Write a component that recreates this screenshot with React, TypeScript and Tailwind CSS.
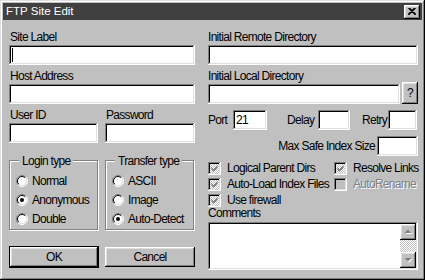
const ui = "font-['Liberation_Sans',Arial,sans-serif] text-[12px] tracking-[-0.7px] text-black";
const sunken =
  "bg-white shadow-[inset_-1px_-1px_#fff,inset_1px_1px_#808080,inset_-2px_-2px_#dfdfdf,inset_2px_2px_#000]";
const raised =
  "bg-[#c0c0c0] shadow-[inset_-1px_-1px_#000,inset_1px_1px_#fff,inset_-2px_-2px_#808080,inset_2px_2px_#dfdfdf]";
const dither =
  "bg-[repeating-conic-gradient(#fff_0%_25%,#c0c0c0_0%_50%)] bg-[length:2px_2px]";

const Radio = ({ label, on }: { label: string; on?: boolean }) => (
  <div className="flex h-[19px] items-center gap-[4px]">
    <svg width="12" height="12" viewBox="0 0 12 12">
      <circle cx="6" cy="6" r="5" fill="#fff" />
      <path d="M2.1 9.9 A5.5 5.5 0 0 1 9.9 2.1" fill="none" stroke="#808080" />
      <path d="M9.9 2.1 A5.5 5.5 0 0 1 2.1 9.9" fill="none" stroke="#fff" />
      <path d="M2.8 9.2 A4.5 4.5 0 0 1 9.2 2.8" fill="none" stroke="#000" />
      <path d="M9.2 2.8 A4.5 4.5 0 0 1 2.8 9.2" fill="none" stroke="#dfdfdf" />
      {on && <circle cx="6" cy="6" r="2" fill="#000" />}
    </svg>
    <span className="whitespace-nowrap leading-[16px]">{label}</span>
  </div>
);

const Check = ({ label, on, off }: { label: string; on?: boolean; off?: boolean }) => (
  <div className="flex h-[16px] items-center gap-[6px]">
    <div
      className={`h-[13px] w-[13px] shrink-0 ${
        off ? "bg-[#c0c0c0]" : dither
      } shadow-[inset_-1px_-1px_#fff,inset_1px_1px_#808080,inset_-2px_-2px_#dfdfdf,inset_2px_2px_#000]`}
    >
      {on && (
        <svg width="13" height="13" viewBox="0 0 13 13">
          <path d="M3.5 5.5 L5.5 7.5 L9.5 3.5 M3.5 6.5 L5.5 8.5 L9.5 4.5 M3.5 7.5 L5.5 9.5 L9.5 5.5" fill="none" stroke="#808080" strokeWidth="1" />
        </svg>
      )}
    </div>
    <span
      className={`leading-[16px] whitespace-nowrap ${
        off ? "text-[#808080] [text-shadow:1px_1px_0_#fff]" : ""
      }`}
    >
      {label}
    </span>
  </div>
);

const Group = ({ title, children }: { title: string; children: React.ReactNode }) => (
  <div className="relative h-[70px] w-[89px] border border-[#808080] shadow-[inset_1px_1px_#fff,1px_1px_#fff]">
    <span className="absolute left-[9px] top-[-8px] whitespace-nowrap bg-[#c0c0c0] px-[3px] leading-[16px]">
      {title}
    </span>
    <div className="flex flex-col pl-[6px] pt-[10px]">{children}</div>
  </div>
);

const Arrow = ({ up }: { up?: boolean }) => (
  <div className={`flex h-[16px] items-center justify-center ${raised}`}>
    <svg width="9" height="6" viewBox="0 0 9 6">
      {up ? (
        <>
          <polygon points="1.5,5 5,1.5 8.5,5" fill="#fff" />
          <polygon points="0.5,4 4,0.5 7.5,4" fill="#808080" />
        </>
      ) : (
        <>
          <polygon points="1.5,2 5,5.5 8.5,2" fill="#fff" />
          <polygon points="0.5,1 4,4.5 7.5,1" fill="#808080" />
        </>
      )}
    </svg>
  </div>
);

export default function App() {
  return (
    <div
      className={`${ui} h-[280px] w-[425px] bg-[#c0c0c0] p-[3px] shadow-[inset_-1px_-1px_#000,inset_1px_1px_#dfdfdf,inset_-2px_-2px_#808080,inset_2px_2px_#fff]`}
    >
      <div className="flex h-[17px] items-center justify-between bg-[#404040] pl-[3px] pr-[2px]">
        <span className="text-[11.5px] leading-[17px] tracking-normal text-white">FTP Site Edit</span>
        <div className={`flex h-[14px] w-[16px] items-center justify-center ${raised}`}>
          <svg width="8" height="7" viewBox="0 0 8 7">
            <path d="M0.5 0 L7.5 7 M7.5 0 L0.5 7 M1.5 0 L8 6.5 M6.5 0 L0 6.5" stroke="#000" strokeWidth="1.1" />
          </svg>
        </div>
      </div>

      <div className="flex gap-[13px] px-[6px]">
        <div className="flex w-[186px] flex-col pt-[9px]">
          <div className="h-[16px] pl-[1px] leading-[16px]">Site Label</div>
          <div className={`flex h-[20px] items-center pl-[3px] ${sunken}`}>
            <span className="h-[14px] w-[1px] bg-black" />
          </div>
          <div className="flex h-[19px] items-end pl-[1px] leading-[16px]">Host Address</div>
          <div className={`h-[20px] ${sunken}`} />
          <div className="flex h-[19px] items-end gap-[7px] leading-[16px]">
            <span className="w-[89px] pl-[1px]">User ID</span>
            <span className="pl-[1px]">Password</span>
          </div>
          <div className="flex gap-[7px]">
            <div className={`h-[20px] w-[89px] ${sunken}`} />
            <div className={`h-[20px] w-[90px] ${sunken}`} />
          </div>
          <div className="mt-[17px] flex gap-[7px]">
            <Group title="Login type">
              <Radio label="Normal" />
              <Radio label="Anonymous" on />
              <Radio label="Double" />
            </Group>
            <Group title="Transfer type">
              <Radio label="ASCII" />
              <Radio label="Image" />
              <Radio label="Auto-Detect" on />
            </Group>
          </div>
          <div className="mt-[16px] flex items-start gap-[6px]">
            <div className="h-[22px] w-[90px] border border-black">
              <div className={`flex h-full items-center justify-center ${raised}`}>OK</div>
            </div>
            <div className={`mt-[1px] flex h-[20px] w-[90px] items-center justify-center ${raised}`}>
              Cancel
            </div>
          </div>
        </div>

        <div className="flex w-[210px] flex-col pt-[9px]">
          <div className="h-[16px] leading-[16px]">Initial Remote Directory</div>
          <div className={`h-[20px] ${sunken}`} />
          <div className="flex h-[19px] items-end leading-[16px]">Initial Local Directory</div>
          <div className="flex h-[20px] items-end gap-[2px]">
            <div className={`h-[20px] w-[192px] ${sunken}`} />
            <div className={`flex h-[22px] w-[16px] items-center justify-center ${raised}`}>?</div>
          </div>
          <div className="mt-[6px] flex h-[20px] items-center">
            <span className="w-[25px]">Port</span>
            <div className={`flex h-[20px] w-[34px] items-center pl-[3px] ${sunken}`}>21</div>
            <span className="ml-[20px] w-[31px]">Delay</span>
            <div className={`h-[20px] w-[32px] ${sunken}`} />
            <span className="ml-[12px] w-[26px]">Retry</span>
            <div className={`h-[20px] w-[29px] ${sunken}`} />
          </div>
          <div className="mt-[6px] flex h-[20px] items-center justify-end gap-[2px]">
            <span>Max Safe Index Size</span>
            <div className={`h-[20px] w-[41px] ${sunken}`} />
          </div>
          <div className="mt-[4px] grid grid-cols-[126px_1fr]">
            <Check label="Logical Parent Dirs" on />
            <Check label="Resolve Links" on />
            <Check label="Auto-Load Index Files" on />
            <Check label="AutoRename" off />
            <Check label="Use firewall" on />
          </div>
          <div className="h-[14px] leading-[10px]">Comments</div>
          <div className={`flex h-[48px] p-[2px] ${sunken}`}>
            <div className="flex-1" />
            <div className="flex w-[16px] flex-col">
              <Arrow up />
              <div className={`flex-1 ${dither}`} />
              <Arrow />
            </div>
          </div>
        </div>
      </div>
    </div>
  );
}
